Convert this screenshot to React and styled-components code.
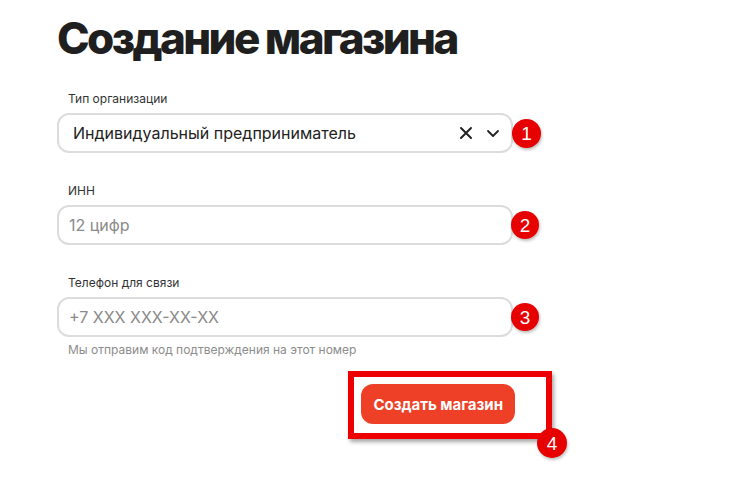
import React from "react";
import styled, { createGlobalStyle } from "styled-components";

const GlobalStyle = createGlobalStyle`
  html, body {
    margin: 0;
    padding: 0;
    min-height: 100%;
    background: #fff;
  }
  body {
    font-family: Inter, "Noto Sans", sans-serif;
    color: #222;
  }
`;

const Page = styled.main`
  padding: 10px 0 60px 57px;
  width: 456px;
`;

const Title = styled.h1`
  margin: 0 0 26px;
  font-size: 44px;
  line-height: 56px;
  font-weight: 800;
  letter-spacing: -2.6px;
  color: #1f1f1f;
`;

const Field = styled.div`
  margin-bottom: ${(p) => (p.$last ? "0" : "31px")};
`;

const Label = styled.label`
  display: block;
  padding-left: 11px;
  margin-bottom: 7px;
  font-size: 12px;
  line-height: 14px;
  color: #333;
`;

const Row = styled.div`
  position: relative;
`;

const Box = styled.div`
  box-sizing: border-box;
  height: 40px;
  display: flex;
  align-items: center;
  padding: 0 10px 0 ${(p) => p.$inset || 14}px;
  border: 2px solid #dcdcdc;
  border-radius: 12px;
  background: #fff;
`;

const Input = styled.input`
  flex: 1;
  border: 0;
  outline: none;
  padding: 0;
  font: inherit;
  font-size: 16px;
  color: #222;
  background: transparent;
  &::placeholder {
    color: #8a8a8a;
  }
`;

const Value = styled.span`
  flex: 1;
  font-size: 16px;
  color: #222;
`;

const Icons = styled.span`
  display: flex;
  align-items: center;
  gap: 12px;
  color: #222;
`;

const Hint = styled.div`
  padding-left: 11px;
  margin-top: 6px;
  font-size: 12px;
  line-height: 14px;
  color: #8c8c8c;
`;

const Badge = styled.span`
  position: absolute;
  z-index: 2;
  left: ${(p) => p.$left || "calc(100% - 1px)"};
  top: ${(p) => p.$top || "50%"};
  margin-top: ${(p) => -(p.$size || 29) / 2}px;
  width: ${(p) => p.$size || 29}px;
  height: ${(p) => p.$size || 29}px;
  border-radius: 50%;
  background: #e60000;
  color: #fff;
  font-family: "Liberation Sans", Arial, sans-serif;
  font-size: 19px;
  line-height: 1;
  display: flex;
  align-items: center;
  justify-content: center;
  box-shadow: 1px 2px 3px rgba(0, 0, 0, 0.25);
`;

const Actions = styled.div`
  display: flex;
  justify-content: flex-end;
  margin-top: 14px;
`;

const Highlight = styled.div`
  position: relative;
  margin-right: -39px;
  padding: 7px 31px 9px 7px;
  border: 6px solid #ee0000;
  box-shadow: 2px 3px 4px rgba(0, 0, 0, 0.35);
`;

const Button = styled.button`
  display: block;
  height: 40px;
  padding: 0 12px;
  border: 0;
  border-radius: 12px;
  background: #ee4026;
  color: #fff;
  font-family: Inter, sans-serif;
  font-size: 15px;
  font-weight: 700;
  cursor: pointer;
`;

const CloseIcon = () => (
  <svg width="14" height="14" viewBox="0 0 14 14" fill="none">
    <path d="M2 2l10 10M12 2L2 12" stroke="#222" strokeWidth="2" strokeLinecap="round" />
  </svg>
);

const Chevron = () => (
  <svg width="16" height="16" viewBox="0 0 16 16" fill="none">
    <path d="M3 6l5 5 5-5" stroke="#222" strokeWidth="1.8" strokeLinecap="round" strokeLinejoin="round" />
  </svg>
);

export default function App() {
  return (
    <>
      <GlobalStyle />
      <Page>
        <Title>Создание магазина</Title>

        <Field>
          <Label>Тип организации</Label>
          <Row>
            <Box>
              <Value>Индивидуальный предприниматель</Value>
              <Icons>
                <CloseIcon />
                <Chevron />
              </Icons>
            </Box>
            <Badge>1</Badge>
          </Row>
        </Field>

        <Field>
          <Label>ИНН</Label>
          <Row>
            <Box $inset={10}>
              <Input placeholder="12 цифр" />
            </Box>
            <Badge $left="calc(100% - 2px)" $size={28}>2</Badge>
          </Row>
        </Field>

        <Field $last>
          <Label>Телефон для связи</Label>
          <Row>
            <Box $inset={10}>
              <Input placeholder="+7 XXX XXX-XX-XX" />
            </Box>
            <Badge $left="calc(100% - 2px)" $size={28}>3</Badge>
          </Row>
          <Hint>Мы отправим код подтверждения на этот номер</Hint>
        </Field>

        <Actions>
          <Highlight>
            <Button>Создать магазин</Button>
            <Badge $left="calc(100% - 9px)" $top="calc(100% + 10px)" $size={30}>4</Badge>
          </Highlight>
        </Actions>
      </Page>
    </>
  );
}
